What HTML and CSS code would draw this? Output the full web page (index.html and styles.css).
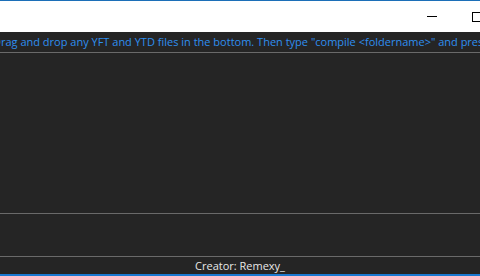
FILE: index.html
```html
<!DOCTYPE html>
<html lang="en">
<head>
    <meta charset="UTF-8">
    <meta name="viewport" content="width=device-width, initial-scale=1.0">
    <title>YFT Compiler</title>
    <link rel="stylesheet" href="styles.css">
</head>
<body>
    <div class="window">
        <div class="titlebar">
            <span class="title-btn btn-min"></span>
            <span class="title-btn btn-max"></span>
        </div>
        <div class="console">
            <div class="hint">Drag and drop any YFT and YTD files in the bottom. Then type "compile &lt;foldername&gt;" and press enter.</div>
            <div class="log"></div>
            <div class="drop-zone"></div>
            <div class="credit">Creator: Remexy_</div>
        </div>
    </div>
</body>
</html>
```

FILE: styles.css
```css
html, body {
    height: 100%;
}

body {
    margin: 0;
    background: #252525;
    overflow: hidden;
}

.window {
    display: flex;
    flex-direction: column;
    height: 100%;
    border-top: 1px solid #1c6fb8;
    border-bottom: 2px solid #1a78d0;
    box-sizing: border-box;
    overflow: hidden;
}

.titlebar {
    background: #fff;
    height: 31px;
    flex: none;
    position: relative;
}

.title-btn {
    position: absolute;
    top: 11px;
}

.btn-min {
    left: 427px;
    top: 15px;
    width: 10px;
    height: 1px;
    background: #000;
}

.btn-max {
    left: 472px;
    width: 10px;
    height: 8px;
    border: 1px solid #000;
}

.console {
    flex: 1;
    display: flex;
    flex-direction: column;
    background: #252525;
    font-family: "Open Sans", sans-serif;
    overflow: hidden;
}

.hint {
    height: 20px;
    line-height: 20px;
    color: #2f8ff0;
    font-size: 11px;
    white-space: nowrap;
    margin-left: -7px;
    border-bottom: 1px solid #6a6a6a;
}

.log {
    flex: 1;
}

.drop-zone {
    height: 42px;
    border-top: 1px solid #6a6a6a;
    border-bottom: 1px solid #6a6a6a;
}

.credit {
    height: 17px;
    line-height: 17px;
    color: #e8e8e8;
    font-size: 11px;
    text-align: center;
}
```
